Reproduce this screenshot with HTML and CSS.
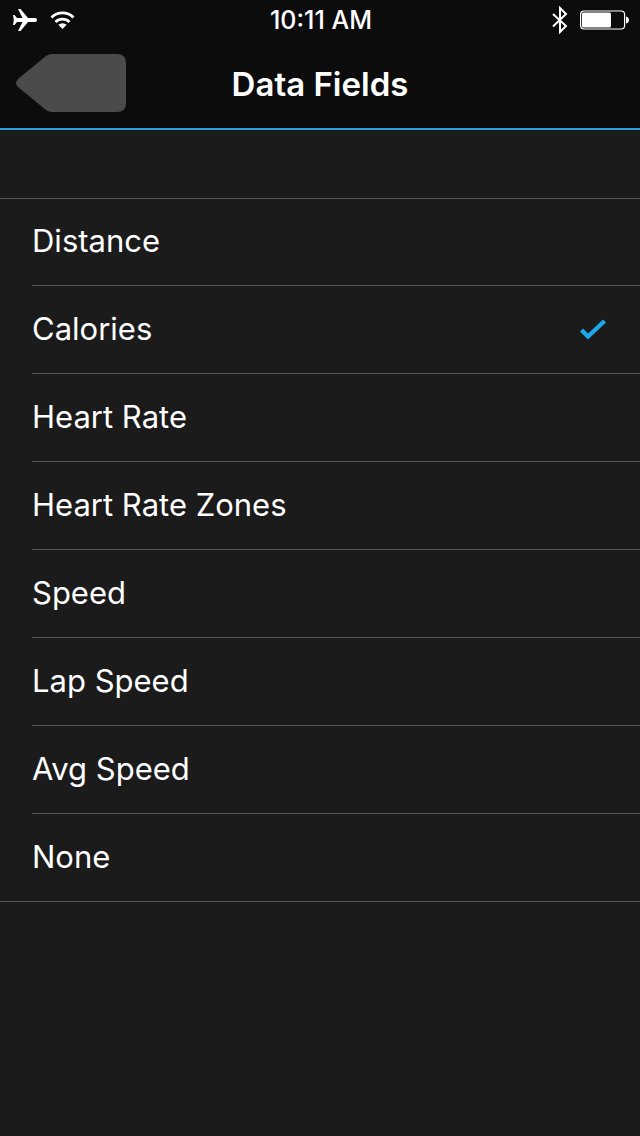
FILE: index.html
```html
<!DOCTYPE html>
<html lang="en">
<head>
    <meta charset="UTF-8">
    <meta name="viewport" content="width=device-width, initial-scale=1.0">
    <title>Data Fields</title>
    <link rel="stylesheet" href="styles.css">
</head>
<body>
    <header class="top">
        <div class="status-bar">
            <div class="status-left">
                <svg width="26" height="24" viewBox="0 0 26 24" fill="#fff" aria-hidden="true">
                    <path d="M1 7h1.500L5 10h5.500L6 1h2.500L16 10h7q2 0 2 2t-2 2h-7L8.500 23H6l4.500-9H5l-2.500 3H1l0.800-5z"/>
                </svg>
                <svg width="26" height="20" viewBox="0 0 26 20" aria-hidden="true">
                    <path d="M1.500 7.500a15.600 15.600 0 0 1 22 0M5.500 12a10 10 0 0 1 14 0" fill="none" stroke="#fff" stroke-width="2.800"/>
                    <path d="M12.500 19l-4.200-4.200a6.400 6.400 0 0 1 8.400 0z" fill="#fff"/>
                </svg>
            </div>
            <span class="time">10:11 AM</span>
            <div class="status-right">
                <svg width="16" height="28" viewBox="0 0 16 28" fill="none" stroke="#fff" stroke-width="2" aria-hidden="true">
                    <path d="M1 8l13 12-6 6v-24l6 6L1 20.500"/>
                </svg>
                <svg width="50" height="20" viewBox="0 0 50 20" aria-hidden="true">
                    <rect x="0.600" y="1" width="44" height="18" rx="3.500" fill="none" stroke="#fff" stroke-width="1.200"/>
                    <rect x="2" y="2.500" width="29" height="15" rx="1.500" fill="#fff"/>
                    <path d="M46 6.500q3 1 3 3.500t-3 3.500z" fill="#fff"/>
                </svg>
            </div>
        </div>
        <nav class="nav-bar">
            <button class="back" type="button" aria-label="Back">
                <svg width="112" height="60" viewBox="0 0 112 60" aria-hidden="true">
                    <path d="M37 0h65q9 0 9 9v40q0 9-9 9H37q-3 0-6-2L3 33q-4-4 0-8L31 2q3-2 6-2z" fill="#4b4b4b"/>
                </svg>
            </button>
            <h1>Data Fields</h1>
        </nav>
    </header>

    <form class="fields">
        <label class="row">
            <span>Distance</span>
            <input type="radio" name="field" value="distance">
        </label>
        <label class="row">
            <span>Calories</span>
            <input type="radio" name="field" value="calories" checked>
            <svg class="check" width="28" height="22" viewBox="0 0 28 22" aria-hidden="true">
                <path d="M1.500 12l6.500 6.500L24.500 3" fill="none" stroke="#1ca8ea" stroke-width="4.400"/>
            </svg>
        </label>
        <label class="row">
            <span>Heart Rate</span>
            <input type="radio" name="field" value="heart-rate">
        </label>
        <label class="row">
            <span>Heart Rate Zones</span>
            <input type="radio" name="field" value="heart-rate-zones">
        </label>
        <label class="row">
            <span>Speed</span>
            <input type="radio" name="field" value="speed">
        </label>
        <label class="row">
            <span>Lap Speed</span>
            <input type="radio" name="field" value="lap-speed">
        </label>
        <label class="row">
            <span>Avg Speed</span>
            <input type="radio" name="field" value="avg-speed">
        </label>
        <label class="row">
            <span>None</span>
            <input type="radio" name="field" value="none">
        </label>
    </form>

    <script>
        // Move the check mark to the selected row
        const check = document.querySelector('.check');

        document.querySelector('.fields').addEventListener('change', (event) => {
            event.target.after(check);
        });
    </script>
</body>
</html>
```
FILE: styles.css
```css
* {
    box-sizing: border-box;
}

body {
    margin: 0;
    min-height: 100vh;
    background-color: #1b1b1b;
    color: #fff;
    font-family: Inter, "Liberation Sans", sans-serif;
}

svg {
    display: block;
}

.top {
    background-color: #0c0c0c;
    border-bottom: 2px solid #2ba0d6;
}

.status-bar {
    display: grid;
    grid-template-columns: 1fr auto 1fr;
    align-items: center;
    height: 40px;
    padding: 0 10px 0 12px;
}

.status-left,
.status-right {
    display: flex;
    align-items: center;
    gap: 12px;
}

.status-right {
    justify-content: flex-end;
}

.time {
    font-size: 25px;
    font-weight: 500;
    line-height: 40px;
}

.nav-bar {
    display: grid;
    grid-template-columns: 1fr auto 1fr;
    align-items: center;
    height: 88px;
    padding: 0 15px;
}

.back {
    justify-self: start;
    padding: 0;
    border: none;
    background: none;
    cursor: pointer;
}

h1 {
    margin: 0;
    font-size: 33px;
    font-weight: 600;
    line-height: 40px;
}

/* The outer lines run edge to edge, the ones between rows are inset */
.fields {
    margin-top: 68px;
    border-top: 1px solid #555;
    border-bottom: 1px solid #555;
}

.row {
    display: flex;
    align-items: center;
    height: 87px;
    margin-left: 32px;
    padding: 0 32px 2px 0;
    font-size: 31px;
    line-height: 40px;
    cursor: pointer;
}

.row + .row {
    height: 88px;
    border-top: 1px solid #555;
}

.row:first-child {
    height: 86px;
}

.row span {
    flex: 1;
}

.row input {
    appearance: none;
    width: 1px;
    height: 1px;
    margin: 0;
}
```
